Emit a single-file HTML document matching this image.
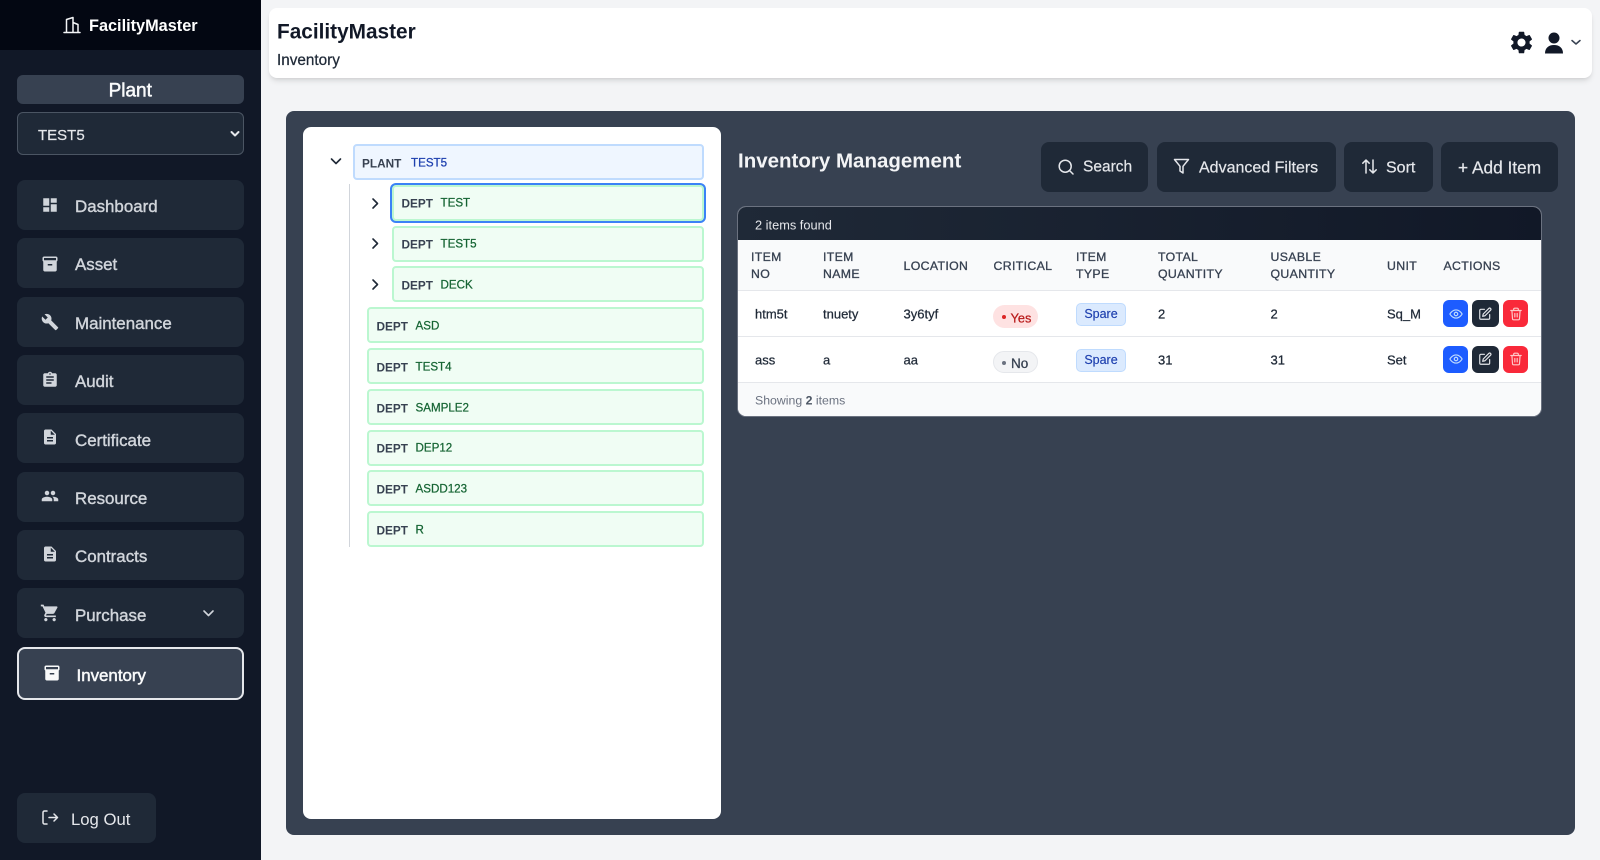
<!DOCTYPE html>
<html><head><meta charset="utf-8"><style>
*{box-sizing:border-box}
html,body{margin:0;padding:0;width:1600px;height:860px;overflow:hidden;background:#f3f4f6;font-family:"Liberation Sans",sans-serif}
.a{position:absolute}
.t{position:absolute;white-space:nowrap;transform:translateY(-50%);line-height:1.2}
.nav{position:absolute;left:16.5px;width:227.5px;height:50px;background:#1f2937;border-radius:8px}
.nt{position:absolute;left:75px;white-space:nowrap;transform:translateY(calc(-50% + 1px));font-size:16.9px;color:#d1d5db;-webkit-text-stroke:.4px #d1d5db;line-height:1.2}
svg{position:absolute;display:block}
.ni{width:18px;height:18px;left:41px;fill:#d1d5db}
.node{position:absolute;height:36px;border-radius:4px;border:2px solid #bbf7d0;background:#f0fdf4}
.k{position:absolute;white-space:nowrap;transform:translateY(calc(-50% + .4px));font-size:11.8px;font-weight:bold;color:#374151;line-height:1.2}
.v{position:absolute;white-space:nowrap;transform:translateY(calc(-50% + .4px));font-size:11.6px;color:#166534;-webkit-text-stroke:.25px #166534;line-height:1.2}
.chev{fill:none;stroke:#1f2937;stroke-width:1.6;stroke-linecap:round;stroke-linejoin:round}
.btn{position:absolute;top:142px;height:50px;background:#1f2937;border-radius:8px}
.bt{position:absolute;white-space:nowrap;transform:translateY(-50%);top:167.5px;font-size:16px;color:#e5e7eb;line-height:1.2}
.bi{fill:none;stroke:#e5e7eb;stroke-width:2;stroke-linecap:round;stroke-linejoin:round}
.th{position:absolute;white-space:nowrap;transform:translateY(calc(-50% + .5px));font-size:12.3px;color:#374151;letter-spacing:.35px;-webkit-text-stroke:.3px #374151;line-height:1.2}
.td{position:absolute;white-space:nowrap;transform:translateY(calc(-50% + .5px));font-size:13px;color:#1f2937;-webkit-text-stroke:.25px #1f2937;line-height:1.2}
.ab{position:absolute;width:25px;height:27px;border-radius:6px}
.ab svg{left:5.5px;top:6.5px;width:14px;height:14px;fill:none;stroke-width:2;stroke-linecap:round;stroke-linejoin:round}
.sp{position:absolute;left:1076px;width:50px;height:23px;background:#dbeafe;border:1px solid #bfdbfe;border-radius:5px;color:#1e40af;font-size:12.5px;line-height:21px;text-align:center}
</style></head><body>

<!-- Sidebar -->
<div class="a" style="left:0;top:0;width:261px;height:860px;background:#111827"></div>
<div class="a" style="left:0;top:0;width:261px;height:50px;background:#030712"></div>
<svg style="left:63px;top:16px;width:18px;height:18px;fill:none;stroke:#f3f4f6;stroke-width:1.5;stroke-linecap:round;stroke-linejoin:round" viewBox="0 0 18 18"><path d="M1 16.5h16M3.500 16.500V3.500L10 1.500v15M10 6.500l5 2v8"/></svg>
<div class="t" style="left:89px;top:27px;font-size:16.300px;font-weight:bold;color:#fff">FacilityMaster</div>

<div class="a" style="left:16.500px;top:75px;width:227.500px;height:29px;background:#374151;border-radius:6px"></div>
<div class="t" style="left:16.500px;width:227.500px;text-align:center;top:91.500px;font-size:19px;color:#f9fafb;-webkit-text-stroke:.5px #f9fafb">Plant</div>
<div class="a" style="left:16.500px;top:112px;width:227.500px;height:43px;background:#1f2937;border:1px solid #4b5563;border-radius:6px"></div>
<div class="t" style="left:38px;top:135.500px;font-size:15px;color:#e5e7eb;-webkit-text-stroke:.2px #e5e7eb">TEST5</div>
<svg class="chev" style="left:230px;top:130px;width:10px;height:8px;stroke:#e5e7eb;stroke-width:2" viewBox="0 0 10 8"><path d="M1.500 2l3.500 3.500L8.500 2"/></svg>

<div class="nav" style="top:180px"></div>
<svg class="ni" style="top:196px" viewBox="0 0 24 24"><path d="M3 13h8V3H3v10zm0 8h8v-6H3v6zm10 0h8V11h-8v10zm0-18v6h8V3h-8z"/></svg>
<div class="nt" style="top:205.500px">Dashboard</div>

<div class="nav" style="top:238px"></div>
<svg class="ni" style="top:255px" viewBox="0 0 24 24"><path d="M20 2H4c-1 0-2 .9-2 2v3.010c0 .72.43 1.340 1 1.690V20c0 1.100 1.100 2 2 2h14c.9 0 2-.9 2-2V8.700c.57-.35 1-.97 1-1.690V4c0-1.100-1-2-2-2zm-5 12H9v-2h6v2zm5-7H4V4l16-.02V7z"/></svg>
<div class="nt" style="top:264px">Asset</div>

<div class="nav" style="top:297px"></div>
<svg class="ni" style="top:313px" viewBox="0 0 24 24"><path d="M22.700 19l-9.100-9.100c.9-2.300.4-5-1.500-6.900-2-2-5-2.400-7.400-1.300L9 6 6 9 1.600 4.700C.4 7.100.9 10.100 2.900 12.100c1.900 1.900 4.600 2.400 6.900 1.500l9.100 9.100c.4.4 1 .4 1.400 0l2.300-2.300c.5-.4.5-1.100.1-1.400z"/></svg>
<div class="nt" style="top:322.500px">Maintenance</div>

<div class="nav" style="top:355px"></div>
<svg class="ni" style="top:371px" viewBox="0 0 24 24"><path d="M19 3h-4.180C14.400 1.840 13.300 1 12 1c-1.300 0-2.400.84-2.820 2H5c-1.100 0-2 .9-2 2v14c0 1.100.9 2 2 2h14c1.100 0 2-.9 2-2V5c0-1.100-.9-2-2-2zm-7 0c.55 0 1 .45 1 1s-.45 1-1 1-1-.45-1-1 .45-1 1-1zm2 14H7v-2h7v2zm3-4H7v-2h10v2zm0-4H7V7h10v2z"/></svg>
<div class="nt" style="top:381px">Audit</div>

<div class="nav" style="top:413px"></div>
<svg class="ni" style="top:428px" viewBox="0 0 24 24"><path d="M14 2H6c-1.100 0-1.990.9-1.990 2L4 20c0 1.100.89 2 1.990 2H18c1.100 0 2-.9 2-2V8l-6-6zm2 16H8v-2h8v2zm0-4H8v-2h8v2zm-3-5V3.500L18.500 9H13z"/></svg>
<div class="nt" style="top:439.500px">Certificate</div>

<div class="nav" style="top:472px"></div>
<svg class="ni" style="top:487px" viewBox="0 0 24 24"><path d="M16 11c1.660 0 2.990-1.340 2.990-3S17.660 5 16 5c-1.660 0-3 1.340-3 3s1.340 3 3 3zm-8 0c1.660 0 2.990-1.340 2.990-3S9.660 5 8 5C6.340 5 5 6.340 5 8s1.340 3 3 3zm0 2c-2.330 0-7 1.170-7 3.500V19h14v-2.500c0-2.330-4.670-3.500-7-3.500zm8 0c-.29 0-.62.02-.97.05 1.160.84 1.970 1.970 1.970 3.450V19h6v-2.500c0-2.330-4.670-3.500-7-3.500z"/></svg>
<div class="nt" style="top:498px">Resource</div>

<div class="nav" style="top:530px"></div>
<svg class="ni" style="top:545px" viewBox="0 0 24 24"><path d="M14 2H6c-1.100 0-1.990.9-1.990 2L4 20c0 1.100.89 2 1.990 2H18c1.100 0 2-.9 2-2V8l-6-6zm2 16H8v-2h8v2zm0-4H8v-2h8v2zm-3-5V3.500L18.500 9H13z"/></svg>
<div class="nt" style="top:556px">Contracts</div>

<div class="nav" style="top:588px"></div>
<svg class="ni" style="top:603px;left:40px;width:20px;height:20px" viewBox="0 0 24 24"><path d="M7 18c-1.100 0-1.990.9-1.990 2S5.900 22 7 22s2-.9 2-2-.9-2-2-2zM1 2v2h2l3.600 7.590-1.350 2.450c-.16.28-.25.61-.25.96 0 1.100.9 2 2 2h12v-2H7.420c-.14 0-.25-.11-.25-.25l.03-.12.9-1.630h7.450c.75 0 1.410-.41 1.750-1.030l3.580-6.490c.08-.14.12-.31.12-.48 0-.55-.45-1-1-1H5.210l-.94-2H1zm16 16c-1.100 0-1.990.9-1.990 2s.89 2 1.990 2 2-.9 2-2-.9-2-2-2z"/></svg>
<div class="nt" style="top:614.500px">Purchase</div>
<svg class="chev" style="left:202px;top:609px;width:13px;height:9px;stroke:#d1d5db" viewBox="0 0 13 9"><path d="M2 2l4.500 4.500L11 2"/></svg>

<div class="a" style="left:16.500px;top:647px;width:227.500px;height:53px;background:#374151;border:2px solid #e5e7eb;border-radius:8px"></div>
<svg class="ni" style="top:664px;left:43px;fill:#f9fafb" viewBox="0 0 24 24"><path d="M20 2H4c-1 0-2 .9-2 2v3.010c0 .72.43 1.340 1 1.690V20c0 1.100 1.100 2 2 2h14c.9 0 2-.9 2-2V8.700c.57-.35 1-.97 1-1.690V4c0-1.100-1-2-2-2zm-5 12H9v-2h6v2zm5-7H4V4l16-.02V7z"/></svg>
<div class="nt" style="left:76.500px;top:674.500px;color:#f9fafb;-webkit-text-stroke:.5px #f9fafb">Inventory</div>

<div class="a" style="left:16.500px;top:793px;width:139.500px;height:50px;background:#1f2937;border-radius:8px"></div>
<svg style="left:41px;top:809px;width:18px;height:17px;fill:none;stroke:#e5e7eb;stroke-width:1.500;stroke-linecap:round;stroke-linejoin:round" viewBox="0 0 18 17"><path d="M6 2H3.500A1.500 1.500 0 0 0 2 3.500v10A1.500 1.500 0 0 0 3.500 15H6M8 8.500h8.500M13 5l3.500 3.500L13 12"/></svg>
<div class="t" style="left:71px;top:820px;font-size:16.700px;color:#e5e7eb">Log Out</div>

<!-- Header -->
<div class="a" style="left:269px;top:8px;width:1322.500px;height:69.500px;background:#fff;border-radius:8px;box-shadow:0 4px 6px -1px rgba(0,0,0,.1),0 2px 4px -2px rgba(0,0,0,.1)"></div>
<div class="t" style="left:277px;top:33px;font-size:20.800px;font-weight:bold;color:#111827">FacilityMaster</div>
<div class="t" style="left:277px;top:60.500px;font-size:15.300px;color:#1f2937;-webkit-text-stroke:.25px #1f2937">Inventory</div>
<svg style="left:1508px;top:29px;width:27px;height:27px;fill:#111827" viewBox="0 0 24 24"><path d="M19.140 12.940c.04-.3.06-.61.06-.94 0-.32-.02-.64-.07-.94l2.030-1.580c.18-.14.23-.41.12-.61l-1.920-3.320c-.12-.22-.37-.29-.59-.22l-2.390.96c-.5-.38-1.030-.7-1.620-.94l-.36-2.540c-.04-.24-.24-.41-.48-.41h-3.840c-.24 0-.43.17-.47.41l-.36 2.540c-.59.24-1.130.57-1.620.94l-2.390-.96c-.22-.08-.47 0-.59.22L2.740 8.870c-.12.21-.08.47.12.61l2.030 1.580c-.05.3-.09.63-.09.94s.02.64.07.94l-2.030 1.580c-.18.14-.23.41-.12.61l1.920 3.320c.12.22.37.29.59.22l2.390-.96c.5.38 1.030.7 1.620.94l.36 2.540c.05.24.24.41.48.41h3.840c.24 0 .44-.17.47-.41l.36-2.540c.59-.24 1.130-.56 1.620-.94l2.390.96c.22.08.47 0 .59-.22l1.920-3.320c.12-.22.07-.47-.12-.61l-2.010-1.580zM12 15.600c-1.980 0-3.600-1.620-3.600-3.600s1.620-3.600 3.600-3.600 3.600 1.620 3.600 3.600-1.620 3.600-3.600 3.600z"/></svg>
<svg style="left:1544px;top:32px;width:20px;height:22px;fill:#111827" viewBox="0 0 20 22"><circle cx="10" cy="6" r="5.500"/><path d="M1 21.500c0-5.500 3.500-8.500 9-8.500s9 3 9 8.500z"/></svg>
<svg class="chev" style="left:1571px;top:39px;width:10px;height:7px;stroke:#374151;stroke-width:1.500" viewBox="0 0 10 7"><path d="M1 1.500l4 3.500 4-3.500"/></svg>

<!-- Main panel -->
<div class="a" style="left:286px;top:111px;width:1289px;height:724px;background:#374151;border-radius:8px"></div>

<!-- Tree card -->
<div class="a" style="left:302.500px;top:127px;width:418.500px;height:691.500px;background:#fff;border-radius:8px"></div>
<div class="a" style="left:348.500px;top:184px;width:1.500px;height:363px;background:#d1d5db"></div>
<svg class="chev" style="left:329px;top:157px;width:14px;height:9px" viewBox="0 0 14 9"><path d="M2.500 2l4.500 4.500L11.500 2"/></svg>

<div class="node" style="left:352.500px;top:144px;width:351.500px;border-color:#bfdbfe;background:#eff6ff"></div>
<div class="k" style="left:362px;top:162.500px">PLANT</div>
<div class="v" style="left:411px;top:162.500px;color:#1e40af;-webkit-text-stroke:.25px #1e40af">TEST5</div>

<div class="node" style="left:391.500px;top:184.500px;width:312.500px;box-shadow:0 0 0 2px #3b82f6"></div>
<svg class="chev" style="left:371px;top:197px;width:9px;height:13px" viewBox="0 0 9 13"><path d="M2 2l4.500 4.500L2 11"/></svg>
<div class="k" style="left:401.500px;top:203px">DEPT</div><div class="v" style="left:440.500px;top:203px">TEST</div>

<div class="node" style="left:391.500px;top:225.500px;width:312.500px"></div>
<svg class="chev" style="left:371px;top:237px;width:9px;height:13px" viewBox="0 0 9 13"><path d="M2 2l4.500 4.500L2 11"/></svg>
<div class="k" style="left:401.500px;top:243.500px">DEPT</div><div class="v" style="left:440.500px;top:243.500px">TEST5</div>

<div class="node" style="left:391.500px;top:266px;width:312.500px"></div>
<svg class="chev" style="left:371px;top:278px;width:9px;height:13px" viewBox="0 0 9 13"><path d="M2 2l4.500 4.500L2 11"/></svg>
<div class="k" style="left:401.500px;top:284.500px">DEPT</div><div class="v" style="left:440.500px;top:284.500px">DECK</div>

<div class="node" style="left:366.500px;top:307px;width:337.500px"></div>
<div class="k" style="left:376.500px;top:325.500px">DEPT</div><div class="v" style="left:415.500px;top:325.500px">ASD</div>
<div class="node" style="left:366.500px;top:348px;width:337.500px"></div>
<div class="k" style="left:376.500px;top:366.500px">DEPT</div><div class="v" style="left:415.500px;top:366.500px">TEST4</div>
<div class="node" style="left:366.500px;top:388.500px;width:337.500px"></div>
<div class="k" style="left:376.500px;top:407.500px">DEPT</div><div class="v" style="left:415.500px;top:407.500px">SAMPLE2</div>
<div class="node" style="left:366.500px;top:429.500px;width:337.500px"></div>
<div class="k" style="left:376.500px;top:448px">DEPT</div><div class="v" style="left:415.500px;top:448px">DEP12</div>
<div class="node" style="left:366.500px;top:470px;width:337.500px"></div>
<div class="k" style="left:376.500px;top:488.500px">DEPT</div><div class="v" style="left:415.500px;top:488.500px">ASDD123</div>
<div class="node" style="left:366.500px;top:511px;width:337.500px"></div>
<div class="k" style="left:376.500px;top:529.500px">DEPT</div><div class="v" style="left:415.500px;top:529.500px">R</div>

<!-- Title & buttons -->
<div class="t" style="left:738px;top:161.500px;font-size:20.500px;font-weight:bold;color:#f3f4f6">Inventory Management</div>

<div class="btn" style="left:1041px;width:107px"></div>
<svg class="bi" style="left:1058px;top:159px;width:16px;height:16px;stroke-width:1.500" viewBox="0 0 16 16"><circle cx="7.200" cy="7.200" r="6"/><path d="M11.500 11.500l3.500 3.500"/></svg>
<div class="bt" style="left:1083px;font-size:15.500px;-webkit-text-stroke:.2px #e5e7eb">Search</div>

<div class="btn" style="left:1157px;width:179px"></div>
<svg class="bi" style="left:1173px;top:158px;width:17px;height:17px;stroke-width:1.500" viewBox="0 0 17 17"><path d="M1.500 1.500h14l-5.500 6.800v6.700l-3-2V8.300z"/></svg>
<div class="bt" style="left:1199px;-webkit-text-stroke:.2px #e5e7eb">Advanced Filters</div>

<div class="btn" style="left:1344px;width:89px"></div>
<svg class="bi" style="left:1361px;top:158px;width:17px;height:17px;stroke-width:1.500" viewBox="0 0 17 17"><path d="M5 15V2M1.800 5.200L5 2l3.200 3.200M12 2v13M8.800 11.800L12 15l3.200-3.200"/></svg>
<div class="bt" style="left:1386px;-webkit-text-stroke:.2px #e5e7eb">Sort</div>

<div class="btn" style="left:1441px;width:117px"></div>
<div class="bt" style="left:1458px;font-size:17.300px;-webkit-text-stroke:.2px #e5e7eb">+ Add Item</div>

<!-- Table card -->
<div class="a" style="left:738px;top:207px;width:803px;height:209px;background:#fff;border-radius:8px;overflow:hidden;box-shadow:0 0 0 1px #6b7280">
  <div class="a" style="left:0;top:0;width:803px;height:33px;background:linear-gradient(90deg,#1f2937,#111827)"></div>
  <div class="a" style="left:0;top:33px;width:803px;height:51px;background:#f9fafb;border-bottom:1px solid #e5e7eb"></div>
  <div class="a" style="left:0;top:129px;width:803px;height:1px;background:#e5e7eb"></div>
  <div class="a" style="left:0;top:175px;width:803px;height:34px;background:#f9fafb;border-top:1px solid #e5e7eb"></div>
</div>
<div class="t" style="left:755px;top:225px;font-size:12.800px;color:#e5e7eb">2 items found</div>

<div class="th" style="left:751px;top:257px">ITEM</div><div class="th" style="left:751px;top:274px">NO</div>
<div class="th" style="left:823px;top:257px">ITEM</div><div class="th" style="left:823px;top:274px">NAME</div>
<div class="th" style="left:903.500px;top:265.500px">LOCATION</div>
<div class="th" style="left:993.500px;top:265.500px">CRITICAL</div>
<div class="th" style="left:1076px;top:257px">ITEM</div><div class="th" style="left:1076px;top:274px">TYPE</div>
<div class="th" style="left:1158px;top:257px">TOTAL</div><div class="th" style="left:1158px;top:274px">QUANTITY</div>
<div class="th" style="left:1270.500px;top:257px">USABLE</div><div class="th" style="left:1270.500px;top:274px">QUANTITY</div>
<div class="th" style="left:1387px;top:265.500px">UNIT</div>
<div class="th" style="left:1443.500px;top:265.500px">ACTIONS</div>

<div class="td" style="left:755px;top:314px">htm5t</div>
<div class="td" style="left:823px;top:314px">tnuety</div>
<div class="td" style="left:903.500px;top:314px">3y6tyf</div>
<div class="a" style="left:993px;top:305px;width:45px;height:23px;background:#fee2e2;border-radius:12px"></div>
<div class="a" style="left:1002px;top:314.500px;width:4px;height:4px;background:#dc2626;border-radius:50%"></div>
<div class="t" style="left:1010.500px;top:317.500px;font-size:12.800px;color:#b91c1c;-webkit-text-stroke:.25px #b91c1c">Yes</div>
<div class="sp" style="top:302.500px;-webkit-text-stroke:.15px #1e40af">Spare</div>
<div class="td" style="left:1158px;top:314px">2</div>
<div class="td" style="left:1270.500px;top:314px">2</div>
<div class="td" style="left:1387px;top:314px">Sq_M</div>

<div class="td" style="left:755px;top:360px">ass</div>
<div class="td" style="left:823px;top:360px">a</div>
<div class="td" style="left:903.500px;top:360px">aa</div>
<div class="a" style="left:993px;top:351px;width:44.500px;height:22px;background:#f3f4f6;border:1px solid #e5e7eb;border-radius:12px"></div>
<div class="a" style="left:1002px;top:360.500px;width:4px;height:4px;background:#6b7280;border-radius:50%"></div>
<div class="t" style="left:1011px;top:363.500px;font-size:13.500px;color:#374151;-webkit-text-stroke:.3px #374151">No</div>
<div class="sp" style="top:348.500px;-webkit-text-stroke:.15px #1e40af">Spare</div>
<div class="td" style="left:1158px;top:360px">31</div>
<div class="td" style="left:1270.500px;top:360px">31</div>
<div class="td" style="left:1387px;top:360px">Set</div>

<div class="t" style="left:755px;top:400.500px;font-size:12.300px;color:#6b7280">Showing <b style="color:#4b5563">2</b> items</div>

<!-- Action buttons -->
<div class="ab" style="left:1443px;top:300px;background:#1d5cff"><svg viewBox="0 0 24 24" stroke="#bfdbfe"><path d="M1.500 12S5.500 5 12 5s10.500 7 10.500 7-4 7-10.500 7S1.500 12 1.500 12z"/><circle cx="12" cy="12" r="3"/></svg></div>
<div class="ab" style="left:1472px;top:300px;background:#1f2937;width:26.500px"><svg viewBox="0 0 24 24" stroke="#e5e7eb" style="left:6px"><path d="M11 4H5a2 2 0 0 0-2 2v13a2 2 0 0 0 2 2h13a2 2 0 0 0 2-2v-6"/><path d="M18.500 2.500a2.100 2.100 0 0 1 3 3L12 15l-4 1 1-4z"/></svg></div>
<div class="ab" style="left:1503px;top:300px;background:#f9293a"><svg viewBox="0 0 24 24" stroke="#fecaca"><path d="M3 6h18M8 6V4a2 2 0 0 1 2-2h4a2 2 0 0 1 2 2v2M19 6l-1 14a2 2 0 0 1-2 2H8a2 2 0 0 1-2-2L5 6M10 11v6M14 11v6"/></svg></div>

<div class="ab" style="left:1443px;top:345.500px;background:#1d5cff"><svg viewBox="0 0 24 24" stroke="#bfdbfe"><path d="M1.500 12S5.500 5 12 5s10.500 7 10.500 7-4 7-10.500 7S1.500 12 1.500 12z"/><circle cx="12" cy="12" r="3"/></svg></div>
<div class="ab" style="left:1472px;top:345.500px;background:#1f2937;width:26.500px"><svg viewBox="0 0 24 24" stroke="#e5e7eb" style="left:6px"><path d="M11 4H5a2 2 0 0 0-2 2v13a2 2 0 0 0 2 2h13a2 2 0 0 0 2-2v-6"/><path d="M18.500 2.500a2.100 2.100 0 0 1 3 3L12 15l-4 1 1-4z"/></svg></div>
<div class="ab" style="left:1503px;top:345.500px;background:#f9293a"><svg viewBox="0 0 24 24" stroke="#fecaca"><path d="M3 6h18M8 6V4a2 2 0 0 1 2-2h4a2 2 0 0 1 2 2v2M19 6l-1 14a2 2 0 0 1-2 2H8a2 2 0 0 1-2-2L5 6M10 11v6M14 11v6"/></svg></div>

</body></html>
